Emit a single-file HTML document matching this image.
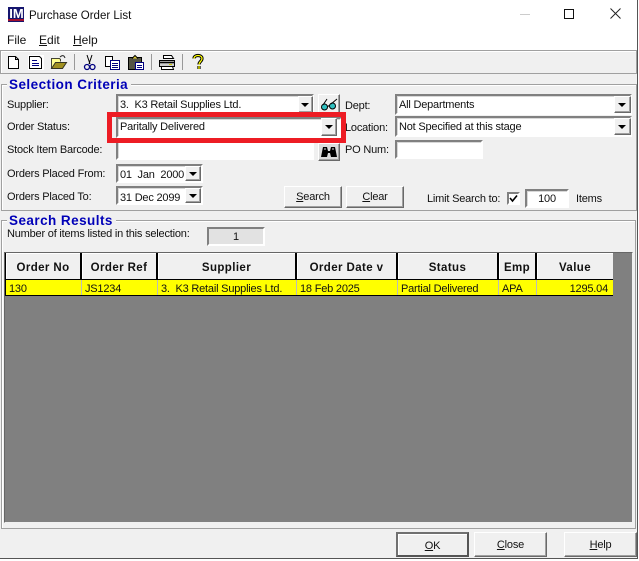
<!DOCTYPE html>
<html><head><meta charset="utf-8">
<style>
html,body{margin:0;padding:0;background:#fff;}
#w{position:relative;width:639px;height:561px;overflow:hidden;background:#fff;font-family:"Liberation Sans",sans-serif;font-size:11px;letter-spacing:-.2px;color:#111;}
#w div{position:absolute;box-sizing:border-box;}
.t{white-space:nowrap;line-height:14px;}
.s{background:#fff;border:2px solid;border-color:#808080 #fff #fff #808080;box-shadow:inset 1px 1px 0 #d8d8d8;}
.b{background:#f0f0f0;border:1px solid;border-color:#fff #696969 #696969 #fff;box-shadow:inset -1px -1px 0 #a0a0a0;text-align:center;}
.a{width:0;height:0;border:4px solid transparent;border-top:4px solid #000;border-bottom:0;}
.g{border:1px solid #a0a0a0;box-shadow:inset 1px 1px 0 #fff;}
.lg{color:#0000b8;font-weight:bold;font-size:13.5px;background:#f0f0f0;letter-spacing:.45px;line-height:14px;padding:0 3px 0 2px;}
.h{background:#f0f0f0;border-right:2px solid #000;border-bottom:1px solid #000;font-weight:bold;text-align:center;line-height:31px;height:27px;top:0;font-size:11.5px;letter-spacing:.4px;box-shadow:inset 1px 1px 0 #fff;}
.c{background:#ff0;border-right:1px solid #bbb;height:15px;top:27px;line-height:19px;padding-left:3px;white-space:nowrap;overflow:hidden;}
u{text-decoration:underline;}
</style></head><body><div id="w">
<!-- window frame -->
<div style="left:637px;top:0;width:1px;height:559px;background:#555"></div>
<div style="left:8px;top:7px;width:16px;height:15px;background:#16166e"></div>
<div class="t" style="left:9px;top:7px;width:15px;color:#fff;font:bold 13px/14px 'Liberation Sans',sans-serif;text-align:center;letter-spacing:0">IM</div>
<div style="left:8px;top:19px;width:16px;height:2px;background:#a01030"></div>
<div class="t" style="left:29px;top:9px;font-size:11.5px;letter-spacing:0;color:#111">Purchase Order List</div>
<div style="left:520px;top:14px;width:10px;height:1px;background:#ccc"></div>
<div style="left:564px;top:9px;width:10px;height:10px;border:1px solid #111"></div>
<svg style="position:absolute;left:610px;top:8px" width="11" height="11"><path d="M.5.5l10 10M10.500.5l-10 10" stroke="#222" fill="none"/></svg>
<div class="t" style="left:7px;top:33px;font-size:12px;letter-spacing:0">File</div>
<div class="t" style="left:39px;top:33px;font-size:12px;letter-spacing:0"><u>E</u>dit</div>
<div class="t" style="left:73px;top:33px;font-size:12px;letter-spacing:0"><u>H</u>elp</div>

<!-- body background -->
<div style="left:0;top:50px;width:637px;height:508px;background:#f0f0f0"></div>
<div style="left:0;top:50px;width:637px;height:24px;border:1px solid #a0a0a0;box-shadow:inset 1px 1px 0 #fff"></div>
<div style="left:0;top:558px;width:638px;height:1px;background:#555"></div>

<!-- toolbar icons -->
<svg style="position:absolute;left:0;top:50px" width="220" height="24" fill="none" stroke="#000">
<path d="M8.500 6.500h7l3 3v9h-10zM15.500 6.500v3h3" fill="#fff"/>
<rect x="28" y="5" width="16" height="15" fill="#fff" stroke="none"/>
<path d="M29.500 6.500h10l2 2v10h-12z" fill="#fff"/><path d="M32 10.500h5M32 13.500h7M32 15.500h7" stroke="#000080"/>
<path d="M51.500 18.500v-10h8l1 1v2" fill="#ffff90" stroke="#443"/><path d="M51.500 18.500l4-6h11l-4 6z" fill="#a09020" stroke="#332"/><path d="M60 7c2-2 4-2 5 1" stroke="#222"/>
<path d="M74.500 4v16" stroke="#999"/>
<path d="M87 5l3 9M92 5l-3 9" stroke="#000"/><circle cx="87" cy="17" r="2.500" stroke="#000080" stroke-width="1.300"/><circle cx="92.500" cy="17" r="2.500" stroke="#000080" stroke-width="1.300"/>
<path d="M105.500 6.500h7v10h-7z" fill="#fff"/><path d="M110.500 10.500h9v9h-9z" fill="#fff" stroke="#000080"/><path d="M112 13.500h6M112 15.500h6M112 17.500h6" stroke="#000080"/>
<rect x="128.500" y="7.500" width="13" height="12" fill="#554"/><path d="M132 8.500l3-3 3 3" fill="#dc3" stroke="#000"/><path d="M135.500 12.500h8v7h-8z" fill="#fff" stroke="#000080"/><path d="M137 15.500h5M137 17.500h5" stroke="#000080"/>
<path d="M151.500 4v16" stroke="#999"/>
<path d="M163.500 5.500h8l2 3h-10z" fill="#fff"/><path d="M159.500 10.500h15v6h-15z" fill="#ccc"/><path d="M161.500 16.500h11l1 3h-12z" fill="#fff"/><path d="M160 12.500h14" stroke="#000" stroke-width="1.500"/><path d="M169 14.500h3" stroke="#cc0"/>
<path d="M182.500 4v16" stroke="#999"/>
<path d="M194 8.500c0-4 8-4 8 0 0 3-3 3-3 6M199 16v3" stroke="#000" stroke-width="3.200"/><path d="M194 8.500c0-4 8-4 8 0 0 3-3 3-3 6M199 16v3" stroke="#ff0" stroke-width="1.300"/>
</svg>

<!-- Selection criteria -->
<div class="g" style="left:1px;top:84px;width:636px;height:127px"></div>
<div class="lg" style="left:7px;top:78px">Selection Criteria</div>
<div class="t" style="left:7px;top:98px">Supplier:</div>
<div class="t" style="left:7px;top:120px">Order Status:</div>
<div class="t" style="left:7px;top:143px">Stock Item Barcode:</div>
<div class="t" style="left:7px;top:167px">Orders Placed From:</div>
<div class="t" style="left:7px;top:190px">Orders Placed To:</div>

<div class="s" style="left:116px;top:94px;width:198px;height:21px"></div>
<div class="t" style="left:120px;top:98px">3.&nbsp; K3 Retail Supplies Ltd.</div>
<div class="b" style="left:298px;top:96px;width:15px;height:17px"></div><div class="a" style="left:301px;top:103px"></div>
<div class="s" style="left:116px;top:117px;width:226px;height:21px"></div>
<div class="t" style="left:120px;top:120px">Paritally Delivered</div>
<div class="b" style="left:321px;top:118px;width:16px;height:18px"></div><div class="a" style="left:325px;top:125px"></div>
<div class="s" style="left:116px;top:140px;width:198px;height:20px"></div>

<div class="b" style="left:318px;top:94px;width:22px;height:21px"></div>
<svg style="position:absolute;left:320px;top:97px" width="18" height="15" fill="none" stroke="#000"><circle cx="4.500" cy="10" r="3" fill="#30c0c0"/><circle cx="12.500" cy="9" r="3" fill="#30c0c0"/><path d="M7.500 9.500l2-1M3 8l4-6M11 7l6-5"/></svg>
<div class="b" style="left:318px;top:143px;width:22px;height:18px;background:#dcdcdc"></div>
<svg style="position:absolute;left:320px;top:144px" width="18" height="15"><path d="M1 13l2-10h4l1 4h2l1-4h4l2 10h-6l-1-4h-2l-1 4z" fill="#000"/><path d="M4 5h2M12 5h2" stroke="#ddd"/></svg>

<div class="t" style="left:345px;top:99px">Dept:</div>
<div class="t" style="left:345px;top:121px">Location:</div>
<div class="t" style="left:345px;top:143px">PO Num:</div>
<div class="s" style="left:395px;top:94px;width:237px;height:21px"></div>
<div class="t" style="left:399px;top:98px">All Departments</div>
<div class="b" style="left:614px;top:96px;width:17px;height:17px"></div><div class="a" style="left:618px;top:103px"></div>
<div class="s" style="left:395px;top:116px;width:237px;height:21px"></div>
<div class="t" style="left:399px;top:120px">Not Specified at this stage</div>
<div class="b" style="left:614px;top:118px;width:17px;height:17px"></div><div class="a" style="left:618px;top:125px"></div>
<div class="s" style="left:395px;top:140px;width:88px;height:19px"></div>

<div class="s" style="left:116px;top:164px;width:87px;height:19px"></div>
<div class="t" style="left:120px;top:168px">01&nbsp; Jan&nbsp; 2000</div>
<div class="b" style="left:185px;top:166px;width:16px;height:15px"></div><div class="a" style="left:189px;top:172px"></div>
<div class="s" style="left:116px;top:186px;width:87px;height:19px"></div>
<div class="t" style="left:120px;top:191px">31 Dec 2099</div>
<div class="b" style="left:185px;top:188px;width:16px;height:15px"></div><div class="a" style="left:189px;top:194px"></div>

<div class="b" style="left:284px;top:186px;width:58px;height:22px;line-height:21px"><u>S</u>earch</div>
<div class="b" style="left:346px;top:186px;width:58px;height:22px;line-height:21px"><u>C</u>lear</div>
<div class="t" style="left:427px;top:192px">Limit Search to:</div>
<div class="s" style="left:507px;top:192px;width:13px;height:13px;box-shadow:none"></div>
<svg style="position:absolute;left:509px;top:194px" width="9" height="9"><path d="M1 4l2.500 3L8 1.500" stroke="#000" stroke-width="1.600" fill="none"/></svg>
<div class="s" style="left:525px;top:189px;width:44px;height:19px"></div>
<div class="t" style="left:525px;top:192px;width:44px;text-align:center">100</div>
<div class="t" style="left:576px;top:192px">Items</div>

<!-- Search results -->
<div class="g" style="left:1px;top:220px;width:635px;height:309px"></div>
<div class="lg" style="left:7px;top:214px">Search Results</div>
<div class="t" style="left:7px;top:227px">Number of items listed in this selection:</div>
<div style="left:207px;top:227px;width:58px;height:19px;background:#e2e2e2;border:2px solid;border-color:#808080 #fff #fff #808080"></div>
<div class="t" style="left:207px;top:230px;width:58px;text-align:center">1</div>

<div style="left:4px;top:252px;width:629px;height:271px;background:#808080;border-top:1px solid #666;border-left:1px solid #666;border-right:1px solid #f0f0f0;border-bottom:1px solid #f0f0f0"></div>
<div style="left:5px;top:253px;width:608px;height:43px;background:#000;border-left:1px solid #000;border-bottom:1px solid #000">
<div class="h" style="left:0;width:76px">Order No</div>
<div class="h" style="left:76px;width:76px">Order Ref</div>
<div class="h" style="left:152px;width:139px">Supplier</div>
<div class="h" style="left:291px;width:101px">Order Date v</div>
<div class="h" style="left:392px;width:101px">Status</div>
<div class="h" style="left:493px;width:38px">Emp</div>
<div class="h" style="left:531px;width:76px;border-right:0">Value</div>
<div class="c" style="left:0;width:76px">130</div>
<div class="c" style="left:76px;width:76px">JS1234</div>
<div class="c" style="left:152px;width:139px">3.&nbsp; K3 Retail Supplies Ltd.</div>
<div class="c" style="left:291px;width:101px">18 Feb 2025</div>
<div class="c" style="left:392px;width:101px">Partial Delivered</div>
<div class="c" style="left:493px;width:38px">APA</div>
<div class="c" style="left:531px;width:76px;border-right:0;text-align:right;padding-right:5px">1295.04</div>
</div>

<!-- Bottom -->
<div class="b" style="left:396px;top:532px;width:73px;height:25px;line-height:24px;border:2px solid;border-color:#707070 #555 #555 #707070;box-shadow:inset 1px 1px 0 #fff"><u>O</u>K</div>
<div class="b" style="left:474px;top:532px;width:73px;height:25px;line-height:25px"><u>C</u>lose</div>
<div class="b" style="left:564px;top:532px;width:73px;height:25px;line-height:25px"><u>H</u>elp</div>

<!-- Red highlight -->
<div style="left:107px;top:112px;width:239px;height:31px;border:5px solid #ed1c24"></div>
</div></body></html>
